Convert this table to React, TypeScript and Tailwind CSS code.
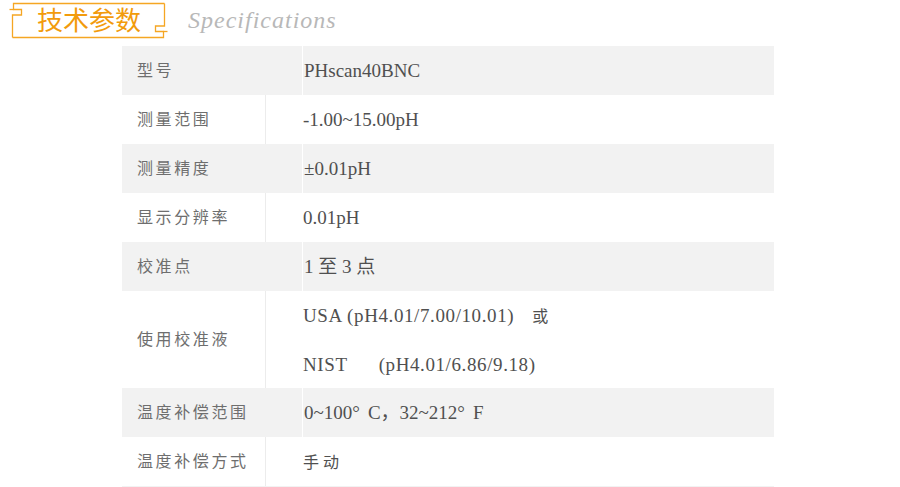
const ORANGE = "#f5a623";

type Row = { label: string; value: React.ReactNode; gray?: boolean; tall?: boolean };

const ROWS: Row[] = [
    { label: "型号", value: "PHscan40BNC", gray: true },
    { label: "测量范围", value: "-1.00~15.00pH" },
    { label: "测量精度", value: "±0.01pH", gray: true },
    { label: "显示分辨率", value: "0.01pH" },
    { label: "校准点", value: "1 至 3 点", gray: true },
    {
        label: "使用校准液",
        tall: true,
        value: (
            <div className="flex flex-col">
                <div className="leading-[48px]">
                    <span className="tracking-[0.6px]">USA (pH4.01/7.00/10.01)</span>
                    <span className="ml-[18px] text-[16px]">或</span>
                </div>
                <div className="leading-[48px]">
                    <span className="tracking-[0.6px]">NIST</span>
                    <span className="ml-[31px] tracking-[0.6px]">(pH4.01/6.86/9.18)</span>
                </div>
            </div>
        ),
    },
    {
        label: "温度补偿范围",
        gray: true,
        value: (
            <span>
                0~100°<span className="ml-[8px]">C，</span>32~212°<span className="ml-[8px]">F</span>
            </span>
        ),
    },
    { label: "温度补偿方式", value: <span className="text-[16px] tracking-[4px]">手动</span> },
];

// fret-style corner, drawn top-left then turned for bottom-right
function Corner() {
    return (
        <>
            <path d="M24 3.5 H13.5 V9.5 H21.5 V15 H12.5 V37.5" />
            <path d="M9.5 9.5 H13.5" />
        </>
    );
}

function TitleFrame() {
    return (
        <div className="relative w-[180px] h-[42px] shrink-0">
            <svg className="absolute inset-0" width="180" height="42" viewBox="0 0 180 42" fill="none" stroke={ORANGE} strokeWidth="1.3">
                <Corner />
                <g transform="rotate(180 88.5 20.5)">
                    <Corner />
                </g>
                <path d="M24 3.5 H164.5" />
                <path d="M12.5 37.5 H153" />
            </svg>
            <div className="pl-[37px] pt-[6px] text-[26px] leading-[26px] text-[#f29b0c]" style={{ fontFamily: "'Noto Sans CJK SC', sans-serif" }}>
                技术参数
            </div>
        </div>
    );
}

export default function App() {
    return (
        <div className="w-[900px] h-[487px] bg-white overflow-hidden">
            <div className="h-[46px] flex items-start">
                <TitleFrame />
                <div className="ml-[8px] mt-[2px] text-[24px] italic text-[#b8b8b8] tracking-[1px]" style={{ fontFamily: "'Liberation Serif', serif" }}>
                    Specifications
                </div>
            </div>

            <div className="ml-[122px] w-[652px]">
                {ROWS.map(r => (
                    <div key={r.label} className={`flex ${r.tall ? "h-[97px]" : "h-[49px]"} ${r.gray ? "bg-[#f2f2f2]" : "bg-white"}`}>
                        <div
                            className={`flex items-center pl-[15px] pb-[4px] text-[16px] tracking-[2.6px] text-[#6e6e6e] ${r.gray ? "w-[181px] border-r border-white" : "w-[144px] border-r border-[#ececec]"}`}
                            style={{ fontFamily: "'Noto Sans CJK SC', sans-serif" }}
                        >
                            {r.label}
                        </div>
                        <div
                            className={`flex-1 flex items-center pt-[2px] text-[19px] text-[#505050] ${r.gray ? "pl-[1px]" : "pl-[37px]"}`}
                            style={{ fontFamily: "'Liberation Serif', 'Noto Sans CJK SC', serif" }}
                        >
                            {r.value}
                        </div>
                    </div>
                ))}
                <div className="h-[49px] bg-[#f2f2f2]" />
            </div>
        </div>
    );
}
